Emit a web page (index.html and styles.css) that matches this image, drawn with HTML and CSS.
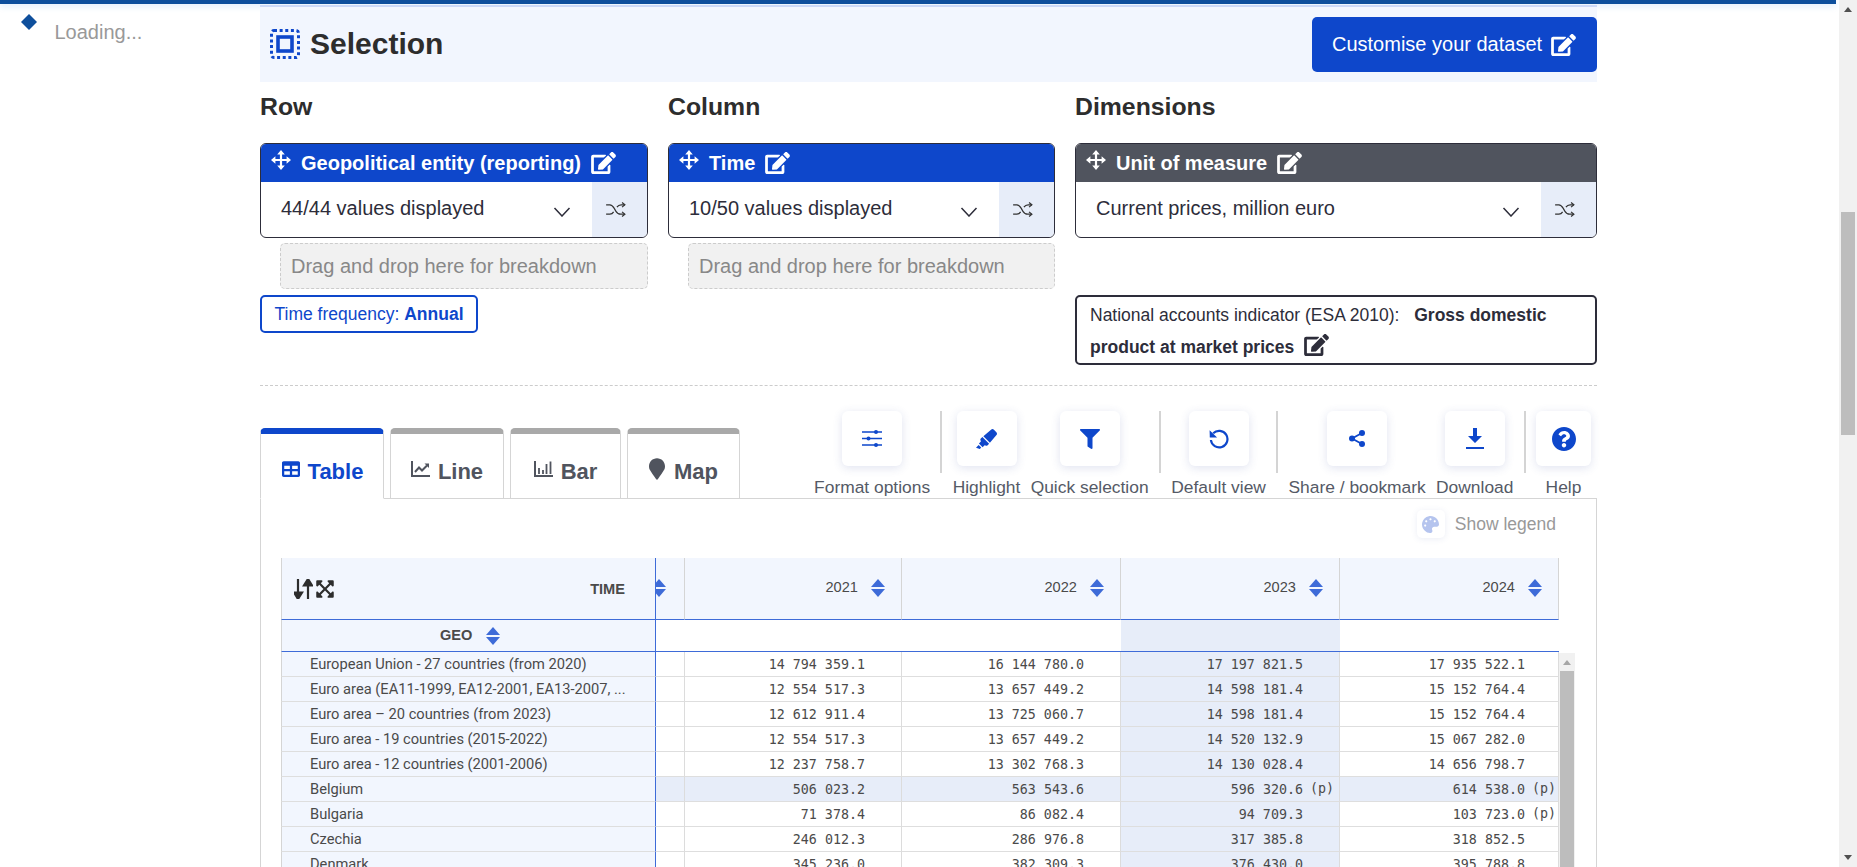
FILE: index.html
```html
<!DOCTYPE html>
<html lang="en">
<head>
  <meta charset="UTF-8">
  <title>Data Browser - Selection</title>
  <link rel="stylesheet" href="styles.css">
</head>
<body>
  <!-- icon sprite -->
  <svg class="sprite" xmlns="http://www.w3.org/2000/svg">
    <symbol id="i-edit" viewBox="0 0 576 512"><path d="M402.6 83.2l90.2 90.2c3.8 3.8 3.8 10 0 13.8L274.4 405.6l-92.8 10.3c-12.4 1.4-22.9-9.1-21.5-21.5l10.3-92.8L388.8 83.2c3.8-3.8 10-3.8 13.8 0zm162-22.9l-48.8-48.8c-15.2-15.2-39.9-15.2-55.2 0l-35.4 35.4c-3.8 3.8-3.8 10 0 13.8l90.2 90.2c3.8 3.8 10 3.8 13.8 0l35.4-35.4c15.2-15.3 15.2-40 0-55.2zM384 346.2V448H64V128h229.8c3.2 0 6.2-1.3 8.5-3.5l40-40c7.6-7.6 2.2-20.5-8.5-20.5H48C21.5 64 0 85.5 0 112v352c0 26.5 21.5 48 48 48h352c26.5 0 48-21.5 48-48V306.2c0-10.7-12.9-16-20.5-8.5l-40 40c-2.2 2.3-3.5 5.3-3.5 8.5z"/></symbol>
    <symbol id="i-move" viewBox="0 0 20 20"><path d="M10 3v14M3 10h14" fill="none" stroke="currentColor" stroke-width="2.200"/><path d="M10 0l3.800 4.400H6.200zM10 20l-3.800-4.400h7.600zM0 10l4.400-3.800v7.600zM20 10l-4.400 3.800V6.200z"/></symbol>
    <symbol id="i-shuffle" viewBox="0 0 22 16"><path d="M1 3h4c2 0 3 1 4.500 3.500l2 3.500c1.500 2.500 3 3 5 3h4M1 13h4c2 0 3-.8 4-2.500M12.500 5.500C13.500 4 15 3 17 3h4" fill="none" stroke="currentColor" stroke-width="1.300"/><path d="M18 .5l3 2.500-3 2.500M18 10.500l3 2.500-3 2.500" fill="none" stroke="currentColor" stroke-width="1.300"/></symbol>
    <symbol id="i-chevron" viewBox="0 0 17 10"><path d="M1 1l7.500 8L16 1" fill="none" stroke="currentColor" stroke-width="1.500"/></symbol>
    <symbol id="i-sort" viewBox="0 0 14 18"><path d="M7 0l7 8H0zM7 18L0 10h14z"/></symbol>
  </svg>

  <div class="page">
    <div class="viewport">
      <div class="topbar"></div>
      <div class="layout">
        <aside class="sidebar">
          <svg class="diamond" viewBox="0 0 16 16"><path d="M8 0l8 8-8 8-8-8z"/></svg>
          <span class="loading">Loading...</span>
        </aside>

        <main class="main">
          <section class="selection-head">
            <h1 class="selection-title">
              <svg class="selection-icon" viewBox="0 0 30 30">
                <rect x="1.500" y="1.500" width="27" height="27" rx="2.500" fill="none" stroke-width="3" stroke-dasharray="3 2.630"/>
                <rect x="8" y="8" width="14" height="14" fill="none" stroke-width="3.600"/>
              </svg>
              Selection
            </h1>
            <a class="customise-btn">Customise your dataset <svg class="edit-icon"><use href="#i-edit"/></svg></a>
          </section>

          <section class="columns">
            <div class="col">
              <h2 class="col-title">Row</h2>
              <div class="dim-box">
                <div class="dim-head">
                  <svg class="move-icon"><use href="#i-move"/></svg>
                  <span>Geopolitical entity (reporting)</span>
                  <svg class="edit-icon"><use href="#i-edit"/></svg>
                </div>
                <div class="dim-body">
                  <span class="dim-value">44/44 values displayed</span>
                  <svg class="chevron"><use href="#i-chevron"/></svg>
                  <span class="shuffle"><svg><use href="#i-shuffle"/></svg></span>
                </div>
              </div>
              <div class="dropzone">Drag and drop here for breakdown</div>
              <div class="freq-tag">Time frequency: <b>Annual</b></div>
            </div>

            <div class="col">
              <h2 class="col-title">Column</h2>
              <div class="dim-box">
                <div class="dim-head">
                  <svg class="move-icon"><use href="#i-move"/></svg>
                  <span>Time</span>
                  <svg class="edit-icon"><use href="#i-edit"/></svg>
                </div>
                <div class="dim-body">
                  <span class="dim-value">10/50 values displayed</span>
                  <svg class="chevron"><use href="#i-chevron"/></svg>
                  <span class="shuffle"><svg><use href="#i-shuffle"/></svg></span>
                </div>
              </div>
              <div class="dropzone">Drag and drop here for breakdown</div>
            </div>

            <div class="col">
              <h2 class="col-title">Dimensions</h2>
              <div class="dim-box dim-grey">
                <div class="dim-head">
                  <svg class="move-icon"><use href="#i-move"/></svg>
                  <span>Unit of measure</span>
                  <svg class="edit-icon"><use href="#i-edit"/></svg>
                </div>
                <div class="dim-body">
                  <span class="dim-value">Current prices, million euro</span>
                  <svg class="chevron"><use href="#i-chevron"/></svg>
                  <span class="shuffle"><svg><use href="#i-shuffle"/></svg></span>
                </div>
              </div>
              <div class="fixed-tag">National accounts indicator (ESA 2010): <b class="fixed-value">Gross domestic product at market prices</b> <svg class="edit-icon"><use href="#i-edit"/></svg></div>
            </div>
          </section>

          <hr class="divider">

          <section class="view-bar">
            <nav class="tabs">
              <a class="tab tab-table active">
                <svg class="tab-icon" viewBox="0 0 512 512"><path d="M464 32H48C21.490 32 0 53.490 0 80v352c0 26.510 21.490 48 48 48h416c26.510 0 48-21.490 48-48V80c0-26.510-21.490-48-48-48zM224 416H64v-96h160v96zm0-160H64v-96h160v96zm224 160H288v-96h160v96zm0-160H288v-96h160v96z"/></svg>
                Table
              </a>
              <a class="tab tab-line">
                <svg class="tab-icon" viewBox="0 0 20 18"><path d="M1 1v15h18" fill="none" stroke="currentColor" stroke-width="2"/><path d="M4 12l4-4.500 3 3 5-5" fill="none" stroke="currentColor" stroke-width="2"/><path d="M13.500 3.500H18V8z"/></svg>
                Line
              </a>
              <a class="tab tab-bar">
                <svg class="tab-icon" viewBox="0 0 20 18"><path d="M1 1v15h18" fill="none" stroke="currentColor" stroke-width="2"/><path d="M5 8v6M9 10v4M12.500 4v10M16.500 1.500V14" fill="none" stroke="currentColor" stroke-width="1.800"/></svg>
                Bar
              </a>
              <a class="tab tab-map">
                <svg class="pin-icon" viewBox="0 0 384 512"><path d="M172.268 501.670C26.970 291.031 0 269.413 0 192 0 85.961 85.961 0 192 0s192 85.961 192 192c0 77.413-26.970 99.031-172.268 309.670-9.535 13.774-29.930 13.773-39.464 0z"/></svg>
                Map
              </a>
            </nav>

            <div class="tools">
              <div class="tool">
                <span class="tool-btn">
                  <svg width="20" height="17" viewBox="0 0 20 17"><path d="M0 2h20M0 8.500h20M0 15h20" stroke="currentColor" stroke-width="1.500"/><circle cx="14" cy="2" r="2"/><circle cx="6.500" cy="8.500" r="2"/><circle cx="14" cy="15" r="2"/></svg>
                </span>
                <span class="tool-label">Format options</span>
              </div>
              <span class="tool-sep"></span>
              <div class="tool">
                <span class="tool-btn">
                  <svg width="21" height="20" viewBox="0 0 544 512"><path d="M0 479.980L99.920 512l35.450-35.450-67.040-67.040L0 479.980zm124.610-240.010a36.592 36.592 0 0 0-10.790 38.100l13.050 42.830-50.930 50.940 96.230 96.230 50.860-50.860 42.740 13.080c13.730 4.200 28.650-.010 38.150-10.780l35.550-41.640-173.340-173.340-41.520 35.640zm403.310-160.700l-63.200-63.200c-20.490-20.490-53.380-21.520-75.120-2.350L190.550 183.680l169.770 169.780L530.270 154.400c19.180-21.740 18.150-54.630-2.350-75.130z"/></svg>
                </span>
                <span class="tool-label">Highlight</span>
              </div>
              <div class="tool">
                <span class="tool-btn">
                  <svg width="20" height="20" viewBox="0 0 512 512"><path d="M487.976 0H24.028C2.710 0-8.047 25.866 7.058 40.971L192 225.941V432c0 7.831 3.821 15.170 10.237 19.662l80 55.980C298.020 518.690 320 507.493 320 487.980V225.941l184.947-184.970C520.021 25.896 509.338 0 487.976 0z"/></svg>
                </span>
                <span class="tool-label">Quick selection</span>
              </div>
              <span class="tool-sep"></span>
              <div class="tool">
                <span class="tool-btn">
                  <svg width="20" height="20" viewBox="0 0 20 20"><path d="M4.200 4.300A8.300 8.300 0 1 1 1.900 11" fill="none" stroke="currentColor" stroke-width="2.200"/><path d="M.6 1.300l.2 7.300h7.300z"/></svg>
                </span>
                <span class="tool-label">Default view</span>
              </div>
              <span class="tool-sep"></span>
              <div class="tool">
                <span class="tool-btn">
                  <svg width="16" height="17" viewBox="0 0 16 17"><path d="M13 3L3 8.500 13 14" fill="none" stroke="currentColor" stroke-width="1.800"/><circle cx="13" cy="3" r="3"/><circle cx="3" cy="8.500" r="3"/><circle cx="13" cy="14" r="3"/></svg>
                </span>
                <span class="tool-label">Share / bookmark</span>
              </div>
              <div class="tool">
                <span class="tool-btn">
                  <svg width="18" height="21" viewBox="0 0 18 21"><path d="M7 0h4v8h5l-7 7-7-7h5z"/><path d="M0 20h18" stroke="currentColor" stroke-width="2"/></svg>
                </span>
                <span class="tool-label">Download</span>
              </div>
              <span class="tool-sep"></span>
              <div class="tool tool-help">
                <span class="tool-btn">
                  <svg width="24" height="24" viewBox="8 8 496 496"><path d="M504 256c0 136.997-111.043 248-248 248S8 392.997 8 256C8 119.083 119.043 8 256 8s248 111.083 248 248zM262.655 90c-54.497 0-89.255 22.957-116.549 63.758-3.536 5.286-2.353 12.415 2.715 16.258l34.699 26.310c5.205 3.947 12.621 3.008 16.665-2.122 17.864-22.658 30.113-35.797 57.303-35.797 20.429 0 45.698 13.148 45.698 32.958 0 14.976-12.363 22.667-32.534 33.976C247.128 238.528 216 254.941 216 296v4c0 6.627 5.373 12 12 12h56c6.627 0 12-5.373 12-12v-1.333c0-28.462 83.186-29.647 83.186-106.667 0-58.002-60.165-102-116.531-102zM256 338c-25.365 0-46 20.635-46 46 0 25.364 20.635 46 46 46s46-20.636 46-46c0-25.365-20.635-46-46-46z"/></svg>
                </span>
                <span class="tool-label">Help</span>
              </div>
            </div>
          </section>

          <section class="panel">
            <div class="legend-row">
              <span class="legend-btn">
                <svg width="17" height="17" viewBox="0 0 512 512"><path d="M204.300 5C104.900 24.400 24.800 104.300 5.200 203.400c-37 187 131.700 326.400 258.800 306.700 41.200-6.400 61.400-54.600 42.500-91.700-23.100-45.400 9.900-98.400 60.900-98.400h79.700c35.800 0 64.800-29.600 64.900-65.300C511.500 97.100 368.100-26.900 204.300 5zM96 320c-17.700 0-32-14.300-32-32s14.300-32 32-32 32 14.300 32 32-14.300 32-32 32zm32-128c-17.700 0-32-14.300-32-32s14.300-32 32-32 32 14.300 32 32-14.300 32-32 32zm128-64c-17.700 0-32-14.300-32-32s14.300-32 32-32 32 14.300 32 32-14.300 32-32 32zm128 64c-17.700 0-32-14.300-32-32s14.300-32 32-32 32 14.300 32 32-14.300 32-32 32z"/></svg>
              </span>
              <span class="legend-label">Show legend</span>
            </div>

            <div class="table-wrap">
              <table class="data-table">
                <colgroup>
                  <col class="c-label"><col class="c-stub"><col class="c-year"><col class="c-year2"><col class="c-year2"><col class="c-year3">
                </colgroup>
                <thead>
                  <tr class="head-time">
                    <th class="corner">
                      <span class="corner-inner">
                        <span class="corner-icons">
                          <svg width="19" height="20" viewBox="0 0 19 20"><path d="M4 0v14M4 20l-4-6.500h8zM14 20V6M14 0l4 6.500h-8z" stroke="currentColor" stroke-width="2.200"/></svg>
                          <svg width="18" height="20" viewBox="0 0 448 512"><path d="M448 344v112a23.940 23.940 0 0 1-24 24H312c-21.390 0-32.090-25.900-17-41l36.200-36.200L224 295.600 116.770 402.900 153 439c15.090 15.100 4.390 41-17 41H24a23.940 23.940 0 0 1-24-24V344c0-21.400 25.890-32.100 41-17l36.190 36.200L184.460 256 77.180 148.700 41 185c-15.100 15.100-41 4.400-41-17V56a23.940 23.940 0 0 1 24-24h112c21.390 0 32.090 25.900 17 41l-36.200 36.200L224 216.400l107.230-107.300L295 73c-15.090-15.100-4.390-41 17-41h112a23.940 23.940 0 0 1 24 24v112c0 21.400-25.890 32.100-41 17l-36.190-36.200L263.540 256l107.280 107.300L407 327.100c15.100-15.200 41-4.500 41 16.900z"/></svg>
                        </span>
                        <b class="corner-time">TIME</b>
                      </span>
                    </th>
                    <th class="year stub"><svg class="sort-icon sort-cut"><use href="#i-sort"/></svg></th>
                    <th class="year">2021 <svg class="sort-icon"><use href="#i-sort"/></svg></th>
                    <th class="year">2022 <svg class="sort-icon"><use href="#i-sort"/></svg></th>
                    <th class="year">2023 <svg class="sort-icon"><use href="#i-sort"/></svg></th>
                    <th class="year">2024 <svg class="sort-icon"><use href="#i-sort"/></svg></th>
                  </tr>
                  <tr class="head-geo">
                    <th class="geo"><b>GEO</b> <svg class="sort-icon"><use href="#i-sort"/></svg></th>
                    <th></th><th></th><th></th><th class="hl"></th><th></th>
                  </tr>
                </thead>
                <tbody>
                  <tr><th>European Union - 27 countries (from 2020)</th><td></td><td>14 794 359.1</td><td>16 144 780.0</td><td class="hl">17 197 821.5</td><td>17 935 522.1</td></tr>
                  <tr><th>Euro area (EA11-1999, EA12-2001, EA13-2007, ...</th><td></td><td>12 554 517.3</td><td>13 657 449.2</td><td class="hl">14 598 181.4</td><td>15 152 764.4</td></tr>
                  <tr><th>Euro area – 20 countries (from 2023)</th><td></td><td>12 612 911.4</td><td>13 725 060.7</td><td class="hl">14 598 181.4</td><td>15 152 764.4</td></tr>
                  <tr><th>Euro area - 19 countries (2015-2022)</th><td></td><td>12 554 517.3</td><td>13 657 449.2</td><td class="hl">14 520 132.9</td><td>15 067 282.0</td></tr>
                  <tr><th>Euro area - 12 countries (2001-2006)</th><td></td><td>12 237 758.7</td><td>13 302 768.3</td><td class="hl">14 130 028.4</td><td>14 656 798.7</td></tr>
                  <tr class="row-hl"><th>Belgium</th><td></td><td>506 023.2</td><td>563 543.6</td><td class="hl">596 320.6<i class="flag">(p)</i></td><td>614 538.0<i class="flag">(p)</i></td></tr>
                  <tr><th>Bulgaria</th><td></td><td>71 378.4</td><td>86 082.4</td><td class="hl">94 709.3</td><td>103 723.0<i class="flag">(p)</i></td></tr>
                  <tr><th>Czechia</th><td></td><td>246 012.3</td><td>286 976.8</td><td class="hl">317 385.8</td><td>318 852.5</td></tr>
                  <tr><th>Denmark</th><td></td><td>345 236.0</td><td>382 309.3</td><td class="hl">376 430.0</td><td>395 788.8</td></tr>
                </tbody>
              </table>
              <div class="table-scroll">
                <span class="arrow-up"></span>
                <span class="table-thumb"></span>
              </div>
            </div>
          </section>
        </main>
      </div>
    </div>

    <!-- page scrollbar -->
    <div class="page-scroll">
      <span class="arrow-up"></span>
      <span class="page-thumb"></span>
      <span class="arrow-down"></span>
    </div>
  </div>
</body>
</html>
```

FILE: styles.css
```css
html, body {
  margin: 0;
  padding: 0;
  height: 867px;
  overflow: hidden;
  background: #fff;
}

body {
  font-family: "Liberation Sans", Arial, sans-serif;
  color: #2d2d3a;
}

.sprite {
  display: none;
}

.page {
  display: flex;
  height: 867px;
}

.viewport {
  width: 1839px;
  overflow: hidden;
}

.topbar {
  height: 4px;
  margin-right: 3px;
  background: #0e4f9c;
  box-shadow: 0 2px 6px rgba(120, 180, 240, 0.3);
}

.layout {
  display: flex;
}

/* sidebar */
.sidebar {
  width: 260px;
  flex: none;
  display: flex;
  align-items: flex-start;
  gap: 17.5px;
  box-sizing: border-box;
  padding: 10px 0 0 21px;
}

.diamond {
  width: 16px;
  height: 16px;
  fill: #0e4f9c;
}

.loading {
  margin-top: 6px;
  font-size: 20px;
  line-height: 24px;
  color: #999;
}

.main {
  width: 1337px;
  flex: none;
}

/* selection header */
.selection-head {
  display: flex;
  align-items: center;
  justify-content: space-between;
  height: 75px;
  margin-top: 1px;
  padding-left: 10px;
  background: #f2f6fe;
  border-top: 2px solid #ccd9f7;
}

.selection-title {
  display: flex;
  align-items: center;
  gap: 10px;
  margin: -2px 0 0;
  font-size: 30px;
  font-weight: bold;
  color: #2d2d2d;
}

.selection-icon {
  width: 30px;
  height: 30px;
  stroke: #0e47cb;
}

.customise-btn {
  display: flex;
  align-items: center;
  gap: 9px;
  height: 55px;
  padding: 0 20px;
  box-sizing: border-box;
  width: 285px;
  border-radius: 5px;
  background: #0e47cb;
  color: #fff;
  font-size: 20px;
  white-space: nowrap;
}

.edit-icon {
  width: 25px;
  height: 22px;
  fill: currentColor;
  flex: none;
}

/* row / column / dimensions */
.columns {
  display: grid;
  grid-template-columns: 388px 387px 522px;
  column-gap: 20px;
}

.col-title {
  margin: 11px 0 22px;
  font-size: 24.8px;
  line-height: 28px;
  color: #2d2d2d;
}

.dim-box {
  height: 95px;
  box-sizing: border-box;
  border: 1px solid #2d2d3a;
  border-radius: 6px;
  overflow: hidden;
}

.dim-head {
  display: flex;
  align-items: center;
  height: 38px;
  padding-left: 10px;
  background: #0e47cb;
  color: #fff;
  font-size: 20px;
  font-weight: bold;
}

.dim-grey .dim-head {
  background: #50545e;
}

.move-icon {
  width: 20px;
  height: 20px;
  margin: -6px 10px 0 0;
  fill: currentColor;
  flex: none;
}

.dim-head .edit-icon {
  margin-left: 10px;
}

.dim-body {
  display: flex;
  align-items: center;
  height: 55px;
}

.dim-value {
  flex: 1;
  padding-left: 20px;
  margin-top: -2px;
  font-size: 20px;
  color: #2d2d3a;
}

.chevron {
  width: 18px;
  height: 10px;
  margin: 4px 21px 0 0;
  color: #2d2d3a;
}

.shuffle {
  display: flex;
  align-items: center;
  justify-content: center;
  width: 55px;
  height: 100%;
  padding-right: 8px;
  box-sizing: border-box;
  background: #e7edf9;
  color: #333;
}

.shuffle svg {
  width: 21px;
  height: 15px;
}

.dropzone {
  height: 46px;
  line-height: 44px;
  margin: 5px 0 0 20px;
  padding-left: 10px;
  box-sizing: border-box;
  background: #f1f1f1;
  border: 1px dashed #ccc;
  border-radius: 5px;
  color: #888;
  font-size: 20px;
}

.freq-tag {
  width: fit-content;
  height: 38px;
  line-height: 34px;
  margin-top: 6px;
  padding: 0 12.5px;
  box-sizing: border-box;
  border: 2px solid #0e47cb;
  border-radius: 5px;
  color: #0e47cb;
  font-size: 17.5px;
}

.fixed-tag {
  height: 70px;
  margin-top: 57px;
  padding: 3px 13px 0;
  box-sizing: border-box;
  border: 2px solid #2d2d3a;
  border-radius: 5px;
  font-size: 17.5px;
  line-height: 31.5px;
}

.fixed-value {
  margin-left: 10px;
}

.fixed-tag .edit-icon {
  width: 25px;
  height: 22px;
  margin-left: 5px;
  vertical-align: -3px;
}

.divider {
  height: 0;
  margin: 20px 0 0;
  border: 0;
  border-top: 1px dashed #ccc;
}

/* tabs + tool buttons */
.view-bar {
  display: flex;
  align-items: flex-end;
  justify-content: space-between;
  margin-top: 25px;
  height: 87px;
}

.tabs {
  display: flex;
  gap: 6px;
  margin: 0 0 -1px 0;
  position: relative;
  z-index: 1;
}

.tab {
  display: flex;
  align-items: center;
  justify-content: center;
  gap: 7px;
  height: 71px;
  padding-top: 12px;
  box-sizing: border-box;
  background: #fff;
  border: 1px solid #d5d5d5;
  border-top: 6px solid #a9a9a9;
  border-radius: 5px 5px 0 0;
  color: #50545e;
  font-size: 22px;
  font-weight: bold;
}

.tab-table { width: 124px; }
.tab-line { width: 114px; }
.tab-bar { width: 111px; }
.tab-map { width: 113px; }

.tab.active {
  border-top-color: #0e47cb;
  border-bottom-color: #fff;
  color: #0e47cb;
}

.tab-icon {
  width: 20px;
  height: 18px;
  margin-top: -6px;
  fill: currentColor;
}

.pin-icon {
  width: 16px;
  height: 22px;
  margin: -6px 2px 0 0;
  fill: currentColor;
}

.tools {
  display: flex;
  gap: 10.3px;
  padding-right: 6px;
}

.tool {
  display: flex;
  flex-direction: column;
  align-items: center;
}

.tool-btn {
  display: flex;
  align-items: center;
  justify-content: center;
  width: 60px;
  height: 55px;
  background: #fff;
  border-radius: 6px;
  box-shadow: 0 2px 10px rgba(60, 80, 160, 0.16);
  color: #0e47cb;
  fill: #0e47cb;
}

.tool-help {
  width: 55px;
}

.tool-help .tool-btn {
  width: 55px;
}

.tool-label {
  margin-top: 10px;
  font-size: 17.4px;
  line-height: 22px;
  color: #555a66;
  white-space: nowrap;
}

.tool-sep {
  width: 2px;
  height: 62px;
  background: #d4d4d4;
}

/* panel and table */
.panel {
  padding: 11px 0 0 20px;
  border: 1px solid #d5d5d5;
  border-bottom: 0;
}

.legend-row {
  display: flex;
  align-items: center;
  justify-content: flex-end;
  gap: 10px;
  height: 28px;
  margin-bottom: 20px;
  padding-right: 40px;
}

.legend-btn {
  display: flex;
  align-items: center;
  justify-content: center;
  width: 28px;
  height: 28px;
  border-radius: 5px;
  box-shadow: 0 1px 6px rgba(60, 80, 160, 0.1);
  fill: #b5c4ee;
}

.legend-label {
  font-size: 17.5px;
  color: #999;
}

.table-wrap {
  display: flex;
}

.data-table {
  width: 1278px;
  flex: none;
  table-layout: fixed;
  border-collapse: separate;
  border-spacing: 0;
  font-size: 14.6px;
  color: #4a4a4a;
}

.c-label { width: 375px; }
.c-stub { width: 29px; }
.c-year { width: 217px; }
.c-year2 { width: 219px; }
.c-year3 { width: 219px; }

.data-table th {
  font-weight: normal;
  padding: 0;
  box-sizing: border-box;
}

.head-time th {
  height: 62px;
  background: #f2f6fe;
  border-bottom: 1px solid #3e6bd8;
  border-right: 1px solid #d5d5d5;
}

.data-table .corner {
  border-right-color: #3e6bd8;
  border-left: 1px solid #d5d5d5;
}

.corner-inner {
  display: flex;
  align-items: center;
  justify-content: space-between;
  padding: 0 30px 0 12px;
}

.corner-icons {
  display: flex;
  gap: 3px;
  color: #2d2d2d;
  fill: #2d2d2d;
}

.corner-time {
  font-size: 14.6px;
}

.data-table .year {
  text-align: right;
  padding: 0 16px 2px 0;
}

.data-table .stub {
  padding: 0 0 2px;
  overflow: hidden;
  text-align: left;
}

.sort-icon {
  width: 14px;
  height: 18px;
  margin-left: 9px;
  fill: #3e6bd8;
  vertical-align: -5px;
}

.sort-cut {
  margin-left: -4px;
}

.head-geo th {
  height: 32px;
  border-bottom: 1px solid #3e6bd8;
}

.data-table .geo {
  background: #f2f6fe;
  border-left: 1px solid #d5d5d5;
  border-right: 1px solid #3e6bd8;
  padding-left: 158px;
  text-align: left;
  font-size: 14.6px;
}

.data-table .hl {
  background: #e7edf9;
}

.data-table tbody tr {
  height: 25px;
}

.data-table tbody th {
  padding-left: 28px;
  background: #f2f6fe;
  border-left: 1px solid #d5d5d5;
  border-right: 1px solid #3e6bd8;
  border-bottom: 1px solid #dedede;
  text-align: left;
  font-family: Roboto, "Liberation Sans", sans-serif;
  font-size: 14.67px;
  white-space: nowrap;
  overflow: hidden;
}

.data-table td {
  box-sizing: border-box;
  height: 25px;
  padding: 0 36px 0 0;
  border-right: 1px solid #dcdcdc;
  border-bottom: 1px solid #dedede;
  text-align: right;
  font-family: "DejaVu Sans Mono", "Liberation Mono", monospace;
  font-size: 13.33px;
  white-space: nowrap;
  position: relative;
}

.data-table td:last-child {
  padding-right: 33px;
}

.row-hl td {
  background: #e7edf9;
}

.flag {
  position: absolute;
  right: 5px;
  top: 4px;
  font-style: normal;
}

td:last-child .flag {
  right: 2px;
}

.table-scroll {
  flex: none;
  width: 16px;
  margin-top: 95px;
  padding-top: 7px;
  box-sizing: border-box;
  background: #f1f1f1;
  display: flex;
  flex-direction: column;
  align-items: center;
}

.table-thumb {
  width: 14px;
  flex: 1;
  margin-top: 6px;
  background: #bdbdbd;
}

.arrow-up,
.arrow-down {
  width: 0;
  height: 0;
  border-left: 4px solid transparent;
  border-right: 4px solid transparent;
}

.arrow-up {
  border-bottom: 5px solid #a6a6a6;
}

.arrow-down {
  border-top: 5px solid #505050;
}

.page-scroll {
  width: 18px;
  flex: none;
  height: 867px;
  padding: 7px 0;
  box-sizing: border-box;
  background: #f1f1f1;
  display: flex;
  flex-direction: column;
  align-items: center;
}

.page-scroll .arrow-up {
  border-bottom-color: #505050;
}

.page-thumb {
  width: 14px;
  height: 223px;
  margin-top: 200px;
  margin-bottom: auto;
  background: #bdbdbd;
}
```
